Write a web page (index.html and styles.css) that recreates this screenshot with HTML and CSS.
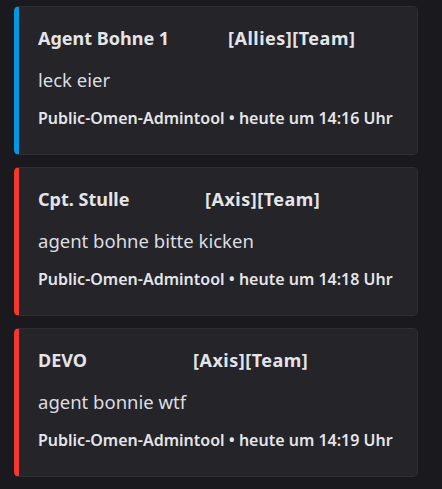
FILE: index.html
```html
<!DOCTYPE html>
<html>
<head>
<meta charset="utf-8">
<link rel="stylesheet" href="styles.css">
</head>
<body>
<div class="feed">
  <div class="embed blue">
    <div class="title"><span class="name n1">Agent Bohne 1</span><span class="tag">[Allies][Team]</span></div>
    <div class="desc">leck eier</div>
    <div class="footer">Public-Omen-Admintool • heute um 14:16 Uhr</div>
  </div>
  <div class="embed red">
    <div class="title"><span class="name n2">Cpt. Stulle</span><span class="tag">[Axis][Team]</span></div>
    <div class="desc">agent bohne bitte kicken</div>
    <div class="footer">Public-Omen-Admintool • heute um 14:18 Uhr</div>
  </div>
  <div class="embed red">
    <div class="title"><span class="name n3">DEVO</span><span class="tag">[Axis][Team]</span></div>
    <div class="desc">agent bonnie wtf</div>
    <div class="footer">Public-Omen-Admintool • heute um 14:19 Uhr</div>
  </div>
</div>
</body>
</html>
```
FILE: styles.css
```css
html, body {
  margin: 0;
  padding: 0;
  background: #1a1a1e;
  height: 100%;
}
body {
  font-family: "Noto Sans", "Open Sans", sans-serif;
  color: #dbdee1;
}
.feed {
  display: flex;
  flex-direction: column;
  gap: 12px;
  padding: 6px 0 0 14px;
  width: 404px;
}
.embed {
  box-sizing: border-box;
  height: 149px;
  background: #242429;
  border: 1px solid #2e2f35;
  border-left: 5px solid #0099e1;
  border-radius: 5px;
  padding: 19px 16px 0 19px;
}
.embed.red { border-left-color: #f6372f; }
.title {
  font-size: 18px;
  font-weight: 700;
  line-height: 24px;
  color: #e3e5e8;
  display: flex;
}
.tag { letter-spacing: 0.5px; }
.n1 { width: 190px; }
.n2 { width: 167px; }
.n3 { width: 155px; }
.desc {
  margin-top: 18px;
  font-size: 18.5px;
  line-height: 24px;
  color: #dbdee1;
}
.footer {
  margin-top: 16px;
  font-size: 16px;
  font-weight: 600;
  line-height: 20px;
  color: #e3e5e8;
}
```
